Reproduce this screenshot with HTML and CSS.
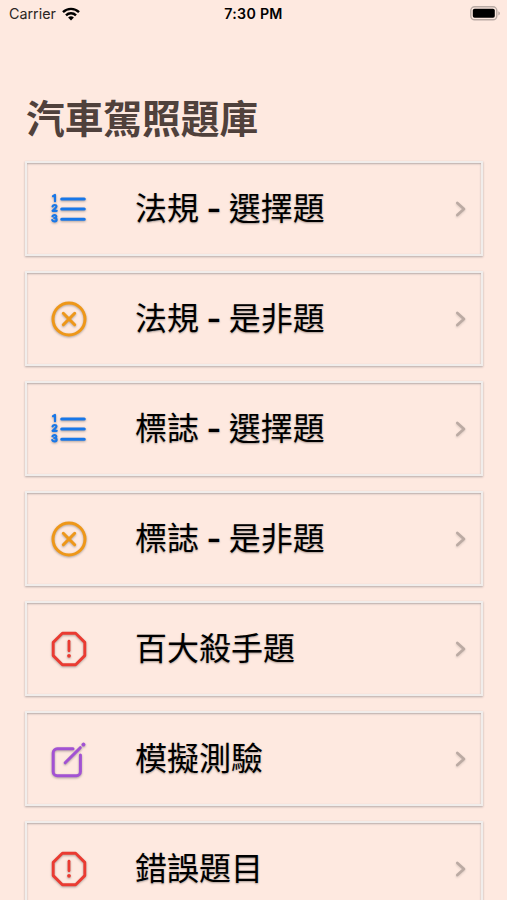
FILE: index.html
```html
<!DOCTYPE html>
<html lang="zh-Hant">
<head>
<meta charset="utf-8">
<title>汽車駕照題庫</title>
<link rel="stylesheet" href="styles.css">
</head>
<body>
<svg class="defs" width="0" height="0" aria-hidden="true">
  <symbol id="list" viewBox="0 0 40 40">
    <g fill="none" stroke="#1877e8" stroke-linecap="round" stroke-linejoin="round">
      <path stroke-width="3" d="M12.7 9.9h22.6M12.7 20h22.6M12.7 30.2h22.6"/>
      <path stroke-width="2.2" d="M4 7.2L6 6v6.2M3.6 17.4c.6-2 4-1.8 3.8.2-.1 1.3-2.2 2.3-3.7 4.2h4M3.5 27.2c.8-1.7 4-1.4 3.8.4-.1 1.1-1 1.5-2.1 1.5 1.3 0 2.4.5 2.4 1.7 0 2.1-3.5 2.2-4.3.3"/>
    </g>
  </symbol>
  <symbol id="cross" viewBox="0 0 40 40">
    <g fill="none" stroke="#ee9719" stroke-width="3" stroke-linecap="round">
      <circle cx="20" cy="20" r="16"/>
      <path d="M14.3 14.3l11.4 11.4M25.7 14.3L14.3 25.7"/>
    </g>
  </symbol>
  <symbol id="alert" viewBox="0 0 40 40">
    <path fill="none" stroke="#ea3b32" stroke-width="2.9" stroke-linejoin="round" d="M13.4 4.2h13.2l9.2 9.2v13.2l-9.2 9.2H13.4l-9.2-9.2V13.4z"/>
    <path stroke="#ea3b32" stroke-width="2.8" stroke-linecap="round" d="M20 12.2v9.6"/>
    <circle cx="20" cy="26.8" r="1.9" fill="#ea3b32"/>
  </symbol>
  <symbol id="compose" viewBox="0 0 40 40">
    <g fill="none" stroke="#a252d3" stroke-width="3" stroke-linecap="round" stroke-linejoin="round">
      <path d="M24 9.8H8.2a4 4 0 0 0-4 4v18.9a4 4 0 0 0 4 4h19.2a4 4 0 0 0 4-4V16"/>
      <path d="M16.2 23.8L31.3 8.7"/>
      <path d="M34.4 5.6l.1-.1" stroke-width="3.8"/>
    </g>
  </symbol>
  <symbol id="chevron" viewBox="0 0 12 18">
    <path fill="none" stroke="#bbaaa3" stroke-width="2.7" stroke-linecap="round" stroke-linejoin="round" d="M2.3 3L9 9l-6.7 6"/>
  </symbol>
</svg>

<header class="status">
  <div class="carrier">
    <span>Carrier</span>
    <svg class="wifi" viewBox="0 0 18 14">
      <g fill="none" stroke="#000" stroke-width="2.4">
        <path d="M1 5.2a11.3 11.3 0 0 1 16 0"/>
        <path d="M4 8.4a7 7 0 0 1 10 0"/>
      </g>
      <path d="M9 13.6l-2.9-3a4.1 4.1 0 0 1 5.8 0z"/>
    </svg>
  </div>
  <time class="clock">7:30 PM</time>
  <svg class="battery" viewBox="0 0 31 15">
    <rect x=".8" y=".8" width="26" height="13" rx="3.8" fill="none" stroke="#b9aaa4" stroke-width="1.4"/>
    <rect x="2.8" y="2.8" width="22" height="9" rx="1.8"/>
    <path fill="#b9aaa4" d="M28.3 5.2c2.2.8 2.2 3.4 0 4.2z"/>
  </svg>
</header>

<main class="page">
  <h1 class="title">汽車駕照題庫</h1>
  <nav class="menu">
    <a class="card"><svg class="icon"><use href="#list"/></svg><span class="label">法規 <b>-</b> 選擇題</span><svg class="chevron"><use href="#chevron"/></svg></a>
    <a class="card"><svg class="icon"><use href="#cross"/></svg><span class="label">法規 <b>-</b> 是非題</span><svg class="chevron"><use href="#chevron"/></svg></a>
    <a class="card"><svg class="icon"><use href="#list"/></svg><span class="label">標誌 <b>-</b> 選擇題</span><svg class="chevron"><use href="#chevron"/></svg></a>
    <a class="card"><svg class="icon"><use href="#cross"/></svg><span class="label">標誌 <b>-</b> 是非題</span><svg class="chevron"><use href="#chevron"/></svg></a>
    <a class="card"><svg class="icon"><use href="#alert"/></svg><span class="label">百大殺手題</span><svg class="chevron"><use href="#chevron"/></svg></a>
    <a class="card"><svg class="icon"><use href="#compose"/></svg><span class="label">模擬測驗</span><svg class="chevron"><use href="#chevron"/></svg></a>
    <a class="card"><svg class="icon"><use href="#alert"/></svg><span class="label">錯誤題目</span><svg class="chevron"><use href="#chevron"/></svg></a>
  </nav>
</main>
</body>
</html>
```
FILE: styles.css
```css
* {
  box-sizing: border-box;
}

body {
  margin: 0;
  height: 900px;
  overflow: hidden;
  background: #fee9e0;
  color: #000;
  font-family: Inter, "Noto Sans CJK TC", sans-serif;
}

.defs {
  display: none;
}

.status {
  display: grid;
  grid-template-columns: 1fr auto 1fr;
  align-items: center;
  height: 27px;
  padding: 0 6px 0 8px;
  font-size: 14.3px;
}

.carrier {
  display: flex;
  align-items: center;
  gap: 6px;
  padding-left: 1px;
  color: #2b2523;
}

.wifi {
  width: 18px;
  height: 14px;
}

.clock {
  margin-right: 2px;
  font-size: 14.2px;
  font-weight: 600;
  letter-spacing: 0.3px;
}

.battery {
  justify-self: end;
  width: 31px;
  height: 15px;
}

.page {
  padding: 64px 24px 0 25px;
}

.title {
  margin: 0 0 14px 1px;
  color: #50413c;
  font-size: 38.7px;
  line-height: 56px;
  font-weight: 700;
}

.menu {
  display: flex;
  flex-direction: column;
  gap: 15px;
}

.card {
  display: flex;
  align-items: center;
  height: 95px;
  padding: 0 14px 0 22px;
  border: 2px solid #f1edeb;
  box-shadow: 0 1px 2px rgba(80, 80, 90, 0.42), inset 0 1px 2px rgba(80, 80, 90, 0.42);
}

.icon {
  width: 40px;
  height: 40px;
  margin-right: 46px;
  filter: drop-shadow(0 1px 1px rgba(0, 0, 0, 0.3));
}

.label {
  flex: 1;
  font-size: 32px;
  line-height: 44px;
  word-spacing: -1.6px;
  text-shadow: 0 1px 2px rgba(0, 0, 0, 0.35);
}

.label b {
  font-weight: 600;
}

.chevron {
  width: 12px;
  height: 18px;
  filter: drop-shadow(0 1px 1px rgba(0, 0, 0, 0.15));
}
```
